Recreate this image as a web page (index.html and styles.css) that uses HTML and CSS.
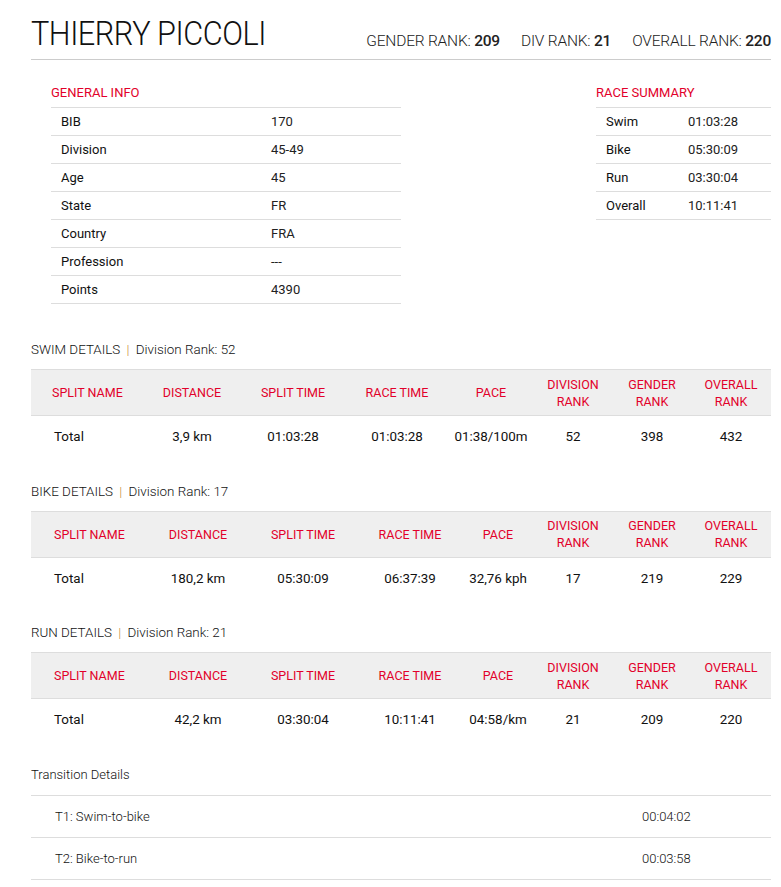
FILE: index.html
```html
<!DOCTYPE html>
<html>
<head>
<meta charset="utf-8">
<link rel="stylesheet" href="styles.css">
</head>
<body>
<div class="page">
  <header class="top">
    <h1 class="name">THIERRY PICCOLI</h1>
    <div class="ranks">
      <span class="rank">GENDER RANK: <b>209</b></span>
      <span class="rank">DIV RANK: <b>21</b></span>
      <span class="rank">OVERALL RANK: <b>220</b></span>
    </div>
  </header>

  <section class="info">
    <div class="general">
      <h2 class="sub">GENERAL INFO</h2>
      <table class="kv gen">
        <tr><td>BIB</td><td class="val">170</td></tr>
        <tr><td>Division</td><td class="val">45-49</td></tr>
        <tr><td>Age</td><td class="val">45</td></tr>
        <tr><td>State</td><td class="val">FR</td></tr>
        <tr><td>Country</td><td class="val">FRA</td></tr>
        <tr><td>Profession</td><td class="val">---</td></tr>
        <tr><td>Points</td><td class="val">4390</td></tr>
      </table>
    </div>
    <div class="summary">
      <h2 class="sub">RACE SUMMARY</h2>
      <table class="kv sum">
        <tr><td>Swim</td><td class="val">01:03:28</td></tr>
        <tr><td>Bike</td><td class="val">05:30:09</td></tr>
        <tr><td>Run</td><td class="val">03:30:04</td></tr>
        <tr><td>Overall</td><td class="val">10:11:41</td></tr>
      </table>
    </div>
  </section>

  <section class="detail">
    <h3 class="dhead">SWIM DETAILS <span class="pipe">|</span> Division Rank: 52</h3>
    <table class="splits swim">
      <thead><tr><th>SPLIT NAME</th><th>DISTANCE</th><th>SPLIT TIME</th><th>RACE TIME</th><th>PACE</th><th>DIVISION<br>RANK</th><th>GENDER<br>RANK</th><th>OVERALL<br>RANK</th></tr></thead>
      <tbody><tr><td>Total</td><td>3,9 km</td><td>01:03:28</td><td>01:03:28</td><td>01:38/100m</td><td>52</td><td>398</td><td>432</td></tr></tbody>
    </table>
  </section>

  <section class="detail">
    <h3 class="dhead">BIKE DETAILS <span class="pipe">|</span> Division Rank: 17</h3>
    <table class="splits">
      <thead><tr><th>SPLIT NAME</th><th>DISTANCE</th><th>SPLIT TIME</th><th>RACE TIME</th><th>PACE</th><th>DIVISION<br>RANK</th><th>GENDER<br>RANK</th><th>OVERALL<br>RANK</th></tr></thead>
      <tbody><tr><td>Total</td><td>180,2 km</td><td>05:30:09</td><td>06:37:39</td><td>32,76 kph</td><td>17</td><td>219</td><td>229</td></tr></tbody>
    </table>
  </section>

  <section class="detail">
    <h3 class="dhead">RUN DETAILS <span class="pipe">|</span> Division Rank: 21</h3>
    <table class="splits">
      <thead><tr><th>SPLIT NAME</th><th>DISTANCE</th><th>SPLIT TIME</th><th>RACE TIME</th><th>PACE</th><th>DIVISION<br>RANK</th><th>GENDER<br>RANK</th><th>OVERALL<br>RANK</th></tr></thead>
      <tbody><tr><td>Total</td><td>42,2 km</td><td>03:30:04</td><td>10:11:41</td><td>04:58/km</td><td>21</td><td>209</td><td>220</td></tr></tbody>
    </table>
  </section>

  <section class="trans">
    <h3 class="thead">Transition Details</h3>
    <div class="trow"><span>T1: Swim-to-bike</span><span class="tval">00:04:02</span></div>
    <div class="trow"><span>T2: Bike-to-run</span><span class="tval">00:03:58</span></div>
  </section>
</div>
</body>
</html>
```

FILE: styles.css
```css
* { box-sizing: border-box; }
html, body { margin: 0; padding: 0; background: #fff; }
body {
  font-family: Roboto, "Liberation Sans", sans-serif;
  color: #222;
  font-size: 14px;
}
.page {
  width: 740px;
  margin-left: 31px;
  padding-top: 16px;
}
.top {
  display: flex;
  justify-content: space-between;
  align-items: flex-end;
  border-bottom: 1px solid #ccc;
  padding-bottom: 7px;
}
.name {
  margin: 0;
  font-size: 33px;
  font-weight: 300;
  letter-spacing: -0.5px;
  line-height: 36px;
  color: #111;
  transform: scaleX(0.93);
  transform-origin: left;
}
.ranks {
  display: flex;
  gap: 21px;
  font-size: 15.5px;
  font-weight: 300;
  color: #222;
  padding-bottom: 2px;
}
.rank { letter-spacing: -0.2px; }
.rank b { font-weight: 500; }

.info {
  display: flex;
  justify-content: space-between;
  padding-left: 20px;
  margin-top: 23px;
}
.general { width: 350px; }
.summary { width: 175px; }
.sub {
  margin: 0;
  font-size: 13px;
  font-weight: 400;
  color: #e2002a;
  line-height: 20px;
  padding-bottom: 4px;
}
.kv {
  width: 100%;
  border-collapse: collapse;
  border-top: 1px solid #ddd;
}
.kv td {
  height: 28px;
  border-bottom: 1px solid #ddd;
  padding: 0 0 0 10px;
  font-size: 13px;
  color: #111;
}
.kv td.val { color: #222; font-weight: 400; }
.gen td:first-child { width: 210px; }
.sum td:first-child { width: 82px; }

.detail { margin-top: 36px; }
.detail + .detail { margin-top: 24px; }
.dhead {
  margin: 0 0 9px;
  font-size: 13.4px;
  font-weight: 300;
  line-height: 20px;
  color: #111;
}
.pipe { color: #c88a35; margin: 0 3px; }

.splits {
  width: 740px;
  border-collapse: collapse;
  table-layout: fixed;
}
.splits th {
  background: #efefef;
  border-top: 1px solid #ddd;
  border-bottom: 1px solid #ddd;
  color: #e2002a;
  font-weight: 400;
  font-size: 12.5px;
  line-height: 17px;
  height: 46px;
  text-align: center;
  padding: 0;
}
.splits td {
  height: 42px;
  text-align: center;
  font-size: 13.4px;
  font-weight: 400;
  color: #111;
  padding: 0;
}
.splits th:first-child, .splits td:first-child { text-align: left; padding-left: 23px; }
.splits th:nth-child(1) { width: 116px; }
.splits th:nth-child(2) { width: 102px; }
.splits th:nth-child(3) { width: 108px; }
.splits th:nth-child(4) { width: 106px; }
.splits th:nth-child(5) { width: 70px; }
.splits th:nth-child(6) { width: 80px; }
.splits th:nth-child(7) { width: 78px; }
.splits th:nth-child(8) { width: 80px; }
.swim th:nth-child(1) { width: 112px; }
.swim th:nth-child(2) { width: 98px; }
.swim th:nth-child(3) { width: 104px; }
.swim th:nth-child(4) { width: 104px; }
.swim th:nth-child(5) { width: 84px; }
.swim th:first-child { padding-left: 21px; }

.trans { margin-top: 24px; }
.thead {
  margin: 0;
  font-size: 13px;
  font-weight: 300;
  line-height: 20px;
  color: #111;
  padding-bottom: 10px;
  border-bottom: 1px solid #ddd;
}
.trow {
  display: flex;
  height: 42px;
  align-items: center;
  padding-left: 24px;
  border-bottom: 1px solid #ddd;
  font-size: 13px;
  font-weight: 300;
  color: #111;
}
.trow span:first-child { width: 587px; }
```
